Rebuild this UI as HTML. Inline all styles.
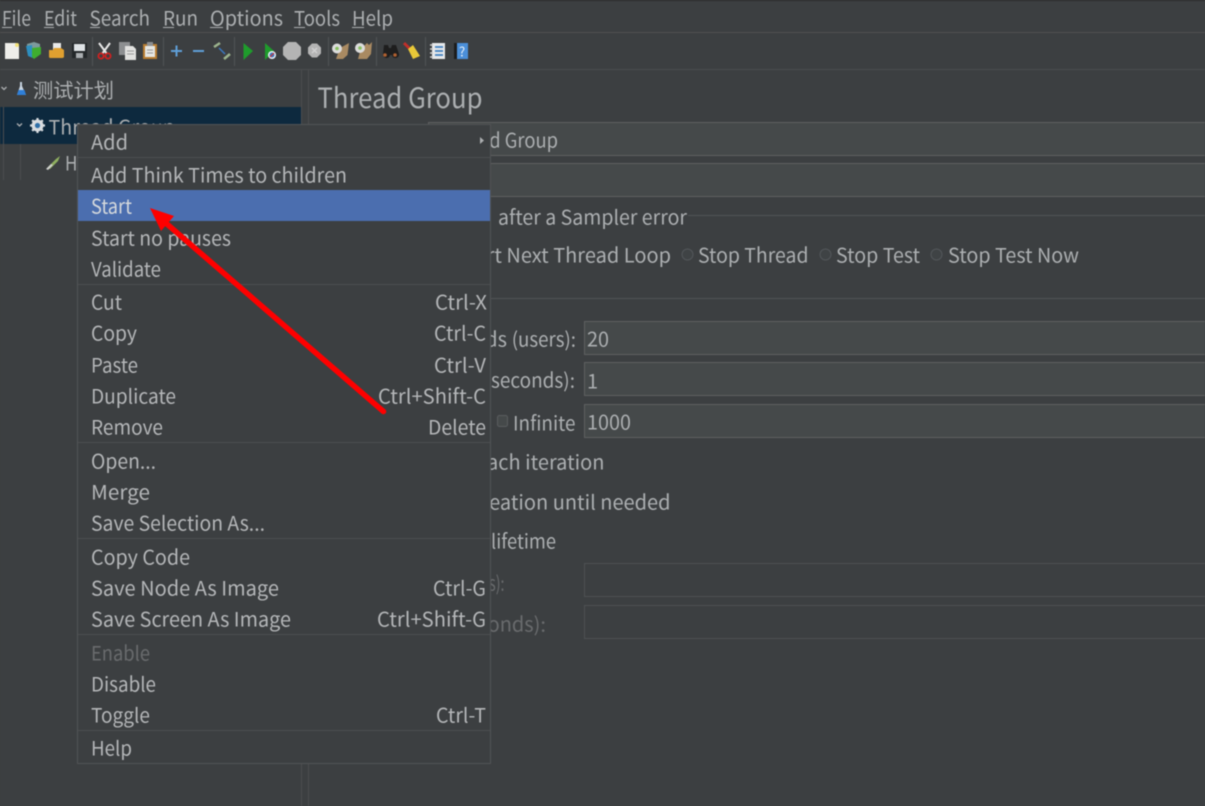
<!DOCTYPE html>
<html><head><meta charset="utf-8"><title>Thread Group</title>
<style>
html,body{margin:0;padding:0;background:#3c3f41;width:1205px;height:806px;overflow:hidden}
svg{display:block;filter:blur(.45px)}
text{font-family:"Noto Sans CJK SC","Liberation Sans",sans-serif;font-size:20px;fill:#acafb1;transform:translateY(.6px)}
.e{text-anchor:end}
.d{fill:#696b6d}
.m{fill:#b4b6b8}
</style></head><body>
<svg width="1205" height="806" viewBox="0 0 1205 806" xmlns="http://www.w3.org/2000/svg">
<rect width="1205" height="806" fill="#3c3f41"/>
<rect width="1205" height="1" fill="#2b2b2b"/>
<rect y="32" width="1205" height="1" fill="#515151"/>
<rect y="69" width="1205" height="1" fill="#4a4c4e"/>

<!-- menu bar -->
<text x="2" y="25" textLength="29" lengthAdjust="spacingAndGlyphs">File</text>
<text x="44" y="25" textLength="33" lengthAdjust="spacingAndGlyphs">Edit</text>
<text x="89.500" y="25" textLength="60.500" lengthAdjust="spacingAndGlyphs">Search</text>
<text x="163" y="25" textLength="35" lengthAdjust="spacingAndGlyphs">Run</text>
<text x="210" y="25" textLength="73" lengthAdjust="spacingAndGlyphs">Options</text>
<text x="294" y="25" textLength="46" lengthAdjust="spacingAndGlyphs">Tools</text>
<text x="352" y="25" textLength="41" lengthAdjust="spacingAndGlyphs">Help</text>
<g fill="#acafb1">
<rect x="2" y="27" width="10" height="1"/><rect x="44" y="27" width="10" height="1"/><rect x="90" y="27" width="10" height="1"/><rect x="163" y="27" width="11" height="1"/><rect x="210" y="27" width="13" height="1"/><rect x="294" y="27" width="11" height="1"/><rect x="352" y="27" width="12" height="1"/>
</g>

<!-- toolbar separators -->
<g fill="#515355">
<rect x="92" y="37" width="1" height="29"/><rect x="163" y="37" width="1" height="29"/><rect x="234" y="37" width="1" height="29"/><rect x="328" y="37" width="1" height="29"/><rect x="376" y="37" width="1" height="29"/><rect x="425" y="37" width="1" height="29"/>
</g>

<!-- new -->
<path d="M5 43h11l3 3v13H5z" fill="#eeeeea"/><circle cx="17" cy="45" r="2" fill="#f2e27a"/>
<!-- templates -->
<path d="M27 44l7-2 6 2v8h-13z" fill="#7d9a9c"/><path d="M26 46l6-1 1 13-5-2z" fill="#2d8fc0"/><path d="M32 48l9-1v7l-7 5-2-2z" fill="#3fae2f"/>
<!-- open -->
<path d="M53 43h8v7h-8z" fill="#e9e9e9"/><path d="M49 50h4l1-2h7l3 2v7a2 2 0 0 1-2 1H50a2 2 0 0 1-1-1z" fill="#e0a030"/>
<!-- save -->
<path d="M72 43h15v15H72z" fill="#24282a"/><rect x="74" y="44" width="11" height="7" fill="#dfe3e6"/><rect x="76" y="53" width="7" height="5" fill="#a9adb0"/>
<!-- cut -->
<path d="M99 43l8 11M110 43l-8 11" stroke="#e8e8e8" stroke-width="2" fill="none"/><circle cx="101" cy="56" r="2.600" fill="none" stroke="#d02020" stroke-width="1.800"/><circle cx="108" cy="56" r="2.600" fill="none" stroke="#d02020" stroke-width="1.800"/>
<!-- copy -->
<rect x="119" y="42" width="11" height="13" fill="#8d8f91"/><path d="M125 46h8l3 3v11h-11z" fill="#e2e2e0"/><path d="M127 51h7M127 54h7" stroke="#9a9a9a"/>
<!-- paste -->
<rect x="143" y="44" width="14" height="15" fill="#b87c30"/><rect x="145" y="46" width="10" height="11" fill="#e6e6e2"/><rect x="147" y="42" width="6" height="4" fill="#8d8f91"/><path d="M147 50h6M147 53h6" stroke="#999"/>
<!-- plus minus -->
<path d="M171 51h11M176.500 45.500v11" stroke="#5f9fd8" stroke-width="2" fill="none"/>
<path d="M193 51h11" stroke="#5f9fd8" stroke-width="2" fill="none"/>
<!-- toggle -->
<path d="M214 47l6-4M224 59l6-5" stroke="#9cb48e" stroke-width="2.500" fill="none"/><path d="M219 48l6 6" stroke="#3a78c0" stroke-width="1.500" fill="none"/>
<!-- start -->
<path d="M243.500 43l9.500 8-9.500 9z" fill="#1f9c2c"/>
<path d="M265 43l9 8-9 9z" fill="#1f9c2c"/><circle cx="272" cy="55" r="4" fill="#e8eef5"/><circle cx="272" cy="55" r="2.500" fill="#3a78c0"/><path d="M270 57l4-4" stroke="#d03030" stroke-width="1.200"/>
<!-- stop -->
<path d="M288 42h8l5 5v8l-5 5h-8l-5-5v-8z" fill="#b4b4b4"/>
<path d="M312 43.500h5l4 4v6l-4 4h-5l-4-4v-6z" fill="#b4b4b4"/><path d="M312 48l5 5M317 48l-5 5" stroke="#d0d0d0" stroke-width="1.500"/>
<!-- clear -->
<path d="M336 59L340 48L349 43L347.500 55L343 59z" fill="#a98a62"/><circle cx="337" cy="48.500" r="5" fill="#dcdcdc"/><circle cx="337" cy="48.500" r="1.800" fill="#88c060"/>
<path d="M358 59L361 48L364 46L367 43L369 45L372 42L371 54L367 59z" fill="#a98a62"/><circle cx="360" cy="48" r="5" fill="#dcdcdc"/><circle cx="360" cy="48" r="1.800" fill="#88c060"/>
<!-- binoculars -->
<path d="M384 45h4l1 3h2l1-3h4l3 9a3.500 3.500 0 0 1-7 1h-2a3.500 3.500 0 0 1-7-1z" fill="#1e1e1e"/><circle cx="385" cy="55" r="1.800" fill="#b06030"/><circle cx="395" cy="55" r="1.800" fill="#b06030"/>
<!-- broom -->
<path d="M404 43l6 6" stroke="#c0302a" stroke-width="3"/><path d="M408 49l5-4 7 11-7 3z" fill="#e8c838"/>
<!-- log -->
<rect x="432" y="43" width="13" height="16" fill="#e6e8ea"/><path d="M430 45h3M430 49h3M430 53h3M430 57h3" stroke="#d0d0d0" stroke-width="1.500"/><path d="M435 47h8M435 51h8M435 55h8" stroke="#3f7fc0" stroke-width="1.800"/>
<!-- help -->
<rect x="454" y="43" width="3" height="16" fill="#1c1c1c"/><rect x="457" y="43" width="11" height="16" fill="#4b8fd8"/>
<text x="459" y="56" style="font-size:13px;fill:#e8f0f8">?</text>

<!-- tree -->
<rect x="0" y="107" width="301" height="37" fill="#0d293e"/>
<rect x="301" y="70" width="1" height="736" fill="#4b4d4f"/>
<rect x="308" y="70" width="1" height="736" fill="#4b4d4f"/>
<rect x="3" y="107" width="1" height="73" fill="#4b4d4f"/>
<rect x="20" y="144" width="1" height="36" fill="#4b4d4f"/>
<path d="M1.500 87l2.500 2.500L6.500 87" stroke="#acafb1" stroke-width="1.300" fill="none"/>
<path d="M17 123.500l2.500 2.500 2.500-2.500" stroke="#acafb1" stroke-width="1.300" fill="none"/>
<path d="M20 82h2v4l4 9H17l3-9z" fill="#c8d4e0"/><path d="M18.500 90h6l1.500 5H17z" fill="#2f7fd8"/>
<text x="33" y="97" textLength="81" lengthAdjust="spacingAndGlyphs">测试计划</text>
<circle cx="37.500" cy="125.500" r="6" fill="#d8dce0"/>
<g stroke="#d8dce0" stroke-width="2.200"><path d="M37.500 118v15M30 125.500h15M32.200 120.200l10.600 10.600M42.800 120.200l-10.600 10.600"/></g>
<circle cx="37.500" cy="125.500" r="2.600" fill="#2f6fa8"/>
<text x="48.500" y="134" textLength="126.500" lengthAdjust="spacingAndGlyphs">Thread Group</text>
<path d="M47 168l9-9 4-3-2 5-8 8z" fill="#8fb060"/><path d="M46 169l5-5 2 1-5 5z" fill="#cfcfcf"/>
<text x="65" y="170" textLength="112" lengthAdjust="spacingAndGlyphs">HTTP Request</text>

<!-- right panel -->
<text x="317.500" y="107.500" style="font-size:28px" textLength="165" lengthAdjust="spacingAndGlyphs">Thread Group</text>
<rect x="428.500" y="122.500" width="790" height="33" fill="#45494a" stroke="#5e6060"/>
<rect x="428.500" y="163.500" width="790" height="33" fill="#45494a" stroke="#5e6060"/>
<text x="440" y="147" textLength="118" lengthAdjust="spacingAndGlyphs">Thread Group</text>
<rect x="688" y="215" width="517" height="1" fill="#515355"/>
<text x="498" y="224" textLength="189" lengthAdjust="spacingAndGlyphs">after a Sampler error</text>
<text class="e" x="671" y="262">Start Next Thread Loop</text>
<g fill="#3f4345" stroke="#53575a"><circle cx="687.500" cy="254.500" r="5.500"/><circle cx="825.500" cy="254.500" r="5.500"/><circle cx="936.500" cy="254.500" r="5.500"/></g>
<text x="698" y="262" textLength="110.500" lengthAdjust="spacingAndGlyphs">Stop Thread</text>
<text x="836" y="262" textLength="84" lengthAdjust="spacingAndGlyphs">Stop Test</text>
<text x="948" y="262" textLength="131" lengthAdjust="spacingAndGlyphs">Stop Test Now</text>
<rect x="430" y="298" width="775" height="1" fill="#515355"/>
<text class="e" x="507" y="346">Number of Threads</text>
<text x="511.700" y="346" textLength="64.300" lengthAdjust="spacingAndGlyphs">(users):</text>
<text class="e" x="489" y="387">Ramp-up period (</text>
<text x="491" y="387" textLength="84" lengthAdjust="spacingAndGlyphs">seconds):</text>
<rect x="497.500" y="415.500" width="10" height="11" rx="2" fill="#45494a" stroke="#5a5d5f"/>
<text x="513" y="430" textLength="62.500" lengthAdjust="spacingAndGlyphs">Infinite</text>
<rect x="584.500" y="321.500" width="640" height="33" fill="#45494a" stroke="#5e6060"/>
<rect x="584.500" y="362.500" width="640" height="33" fill="#45494a" stroke="#5e6060"/>
<rect x="584.500" y="404.500" width="640" height="33" fill="#45494a" stroke="#5e6060"/>
<text x="587" y="346" textLength="22" lengthAdjust="spacingAndGlyphs">20</text>
<text x="587" y="388">1</text>
<text x="587" y="429" textLength="44" lengthAdjust="spacingAndGlyphs">1000</text>
<text class="e" x="604.500" y="469">Same user on each iteration</text>
<text class="e" x="670.500" y="509">Delay Thread creation until needed</text>
<text class="e" x="487" y="548">Specify Thread</text>
<text x="491" y="548" textLength="65" lengthAdjust="spacingAndGlyphs">lifetime</text>
<text class="e d" x="487" y="590">Duration (</text>
<text class="d" x="489" y="590" textLength="15.500" lengthAdjust="spacingAndGlyphs">s):</text>
<text class="e d" x="546" y="631">Startup delay (seconds):</text>
<rect x="584.500" y="563.500" width="640" height="33" fill="none" stroke="#4e5153"/>
<rect x="584.500" y="605.500" width="640" height="33" fill="none" stroke="#4e5153"/>

<!-- context menu -->
<rect x="77.500" y="124.500" width="413" height="639" fill="#3c3f41" stroke="#515355"/>
<g fill="#4c4f51">
<rect x="78" y="157" width="412" height="1"/><rect x="78" y="284" width="412" height="1"/><rect x="78" y="442" width="412" height="1"/><rect x="78" y="538" width="412" height="1"/><rect x="78" y="634" width="412" height="1"/><rect x="78" y="730" width="412" height="1"/>
</g>
<rect x="78" y="190" width="412" height="31" fill="#4b6eaf"/>
<path d="M480 137l4 3.500-4 3.500z" fill="#acafb1"/>
<text class="m" x="91" y="149" textLength="37" lengthAdjust="spacingAndGlyphs">Add</text>
<text class="m" x="91" y="182" textLength="256" lengthAdjust="spacingAndGlyphs">Add Think Times to children</text>
<text x="91" y="213" textLength="41" lengthAdjust="spacingAndGlyphs" style="fill:#d4d8dc">Start</text>
<text class="m" x="91" y="245" textLength="140" lengthAdjust="spacingAndGlyphs">Start no pauses</text>
<text class="m" x="91" y="276" textLength="70" lengthAdjust="spacingAndGlyphs">Validate</text>
<text class="m" x="91" y="309" textLength="31" lengthAdjust="spacingAndGlyphs">Cut</text>
<text class="m" x="91" y="340" textLength="46" lengthAdjust="spacingAndGlyphs">Copy</text>
<text class="m" x="91" y="372" textLength="47" lengthAdjust="spacingAndGlyphs">Paste</text>
<text class="m" x="91" y="403" textLength="85" lengthAdjust="spacingAndGlyphs">Duplicate</text>
<text class="m" x="91" y="434" textLength="72" lengthAdjust="spacingAndGlyphs">Remove</text>
<text class="m" x="91" y="468" textLength="65" lengthAdjust="spacingAndGlyphs">Open...</text>
<text class="m" x="91" y="499" textLength="59" lengthAdjust="spacingAndGlyphs">Merge</text>
<text class="m" x="91" y="530" textLength="174" lengthAdjust="spacingAndGlyphs">Save Selection As...</text>
<text class="m" x="91" y="564" textLength="99" lengthAdjust="spacingAndGlyphs">Copy Code</text>
<text class="m" x="91" y="595" textLength="188" lengthAdjust="spacingAndGlyphs">Save Node As Image</text>
<text class="m" x="91" y="626" textLength="200" lengthAdjust="spacingAndGlyphs">Save Screen As Image</text>
<text class="d" x="91" y="660" textLength="59" lengthAdjust="spacingAndGlyphs">Enable</text>
<text class="m" x="91" y="691" textLength="65" lengthAdjust="spacingAndGlyphs">Disable</text>
<text class="m" x="91" y="722" textLength="59" lengthAdjust="spacingAndGlyphs">Toggle</text>
<text class="m" x="91" y="755" textLength="41" lengthAdjust="spacingAndGlyphs">Help</text>
<text class="m" x="435" y="309" textLength="52" lengthAdjust="spacingAndGlyphs">Ctrl-X</text>
<text class="m" x="434" y="340" textLength="52" lengthAdjust="spacingAndGlyphs">Ctrl-C</text>
<text class="m" x="434" y="372" textLength="52" lengthAdjust="spacingAndGlyphs">Ctrl-V</text>
<text class="m" x="378" y="403" textLength="108" lengthAdjust="spacingAndGlyphs">Ctrl+Shift-C</text>
<text class="m" x="428" y="434" textLength="58" lengthAdjust="spacingAndGlyphs">Delete</text>
<text class="m" x="433" y="595" textLength="53" lengthAdjust="spacingAndGlyphs">Ctrl-G</text>
<text class="m" x="377" y="626" textLength="109" lengthAdjust="spacingAndGlyphs">Ctrl+Shift-G</text>
<text class="m" x="436" y="722" textLength="50" lengthAdjust="spacingAndGlyphs">Ctrl-T</text>

<!-- red arrow -->
<path d="M383.500 411.500L160 218" stroke="#fe0000" stroke-width="5.500" stroke-linecap="round" fill="none"/>
<path d="M150 208L174 216L161 231z" fill="#fe0000"/>
</svg>
</body></html>
